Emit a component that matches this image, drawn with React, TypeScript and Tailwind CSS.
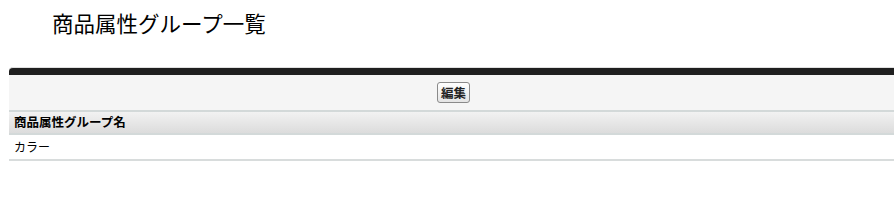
export default function App() {
    return (
        <div className="min-h-screen bg-white font-['Noto_Sans_CJK_JP','Noto_Sans',sans-serif] text-black">
            <h1 className="pl-[52px] pt-[8px] text-[21.5px] leading-[30px] font-normal">商品属性グループ一覧</h1>

            <div className="ml-[9px] mt-[29px] w-[889px]">
                <div className="h-[8px] rounded-tl-[4px] border-t border-[#e0e0e0] bg-[#1f1f1f]" />
                <div className="flex h-[35px] items-center justify-center bg-[#f5f5f5]">
                    <button className="h-[21px] w-[33px] rounded-[3px] border border-[#8a8a8a] bg-gradient-to-b from-white to-[#e4e4e4] text-[12.5px] leading-[19px] font-bold text-[#222]">
                        編集
                    </button>
                </div>
                <div className="flex h-[25px] items-center border-t-2 border-b-2 border-[#d3d9d9] bg-gradient-to-b from-[#f2f2f2] to-[#dcdcdc] pl-[5px] text-[12.5px] font-bold">
                    商品属性グループ名
                </div>
                <div className="flex h-[26px] items-center border-b-2 border-[#d8dcdc] bg-white pl-[5px] text-[12px]">
                    カラー
                </div>
            </div>
        </div>
    );
}
